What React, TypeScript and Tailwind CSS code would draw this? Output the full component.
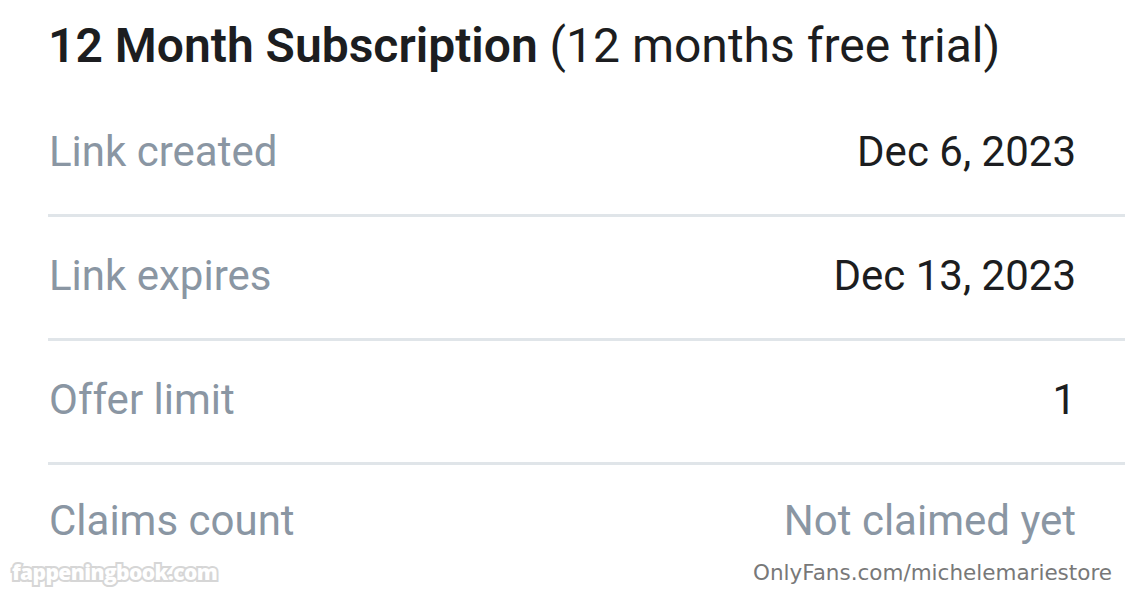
import React from "react";

const rows: { label: string; value: string; muted?: boolean }[] = [
  { label: "Link created", value: "Dec 6, 2023" },
  { label: "Link expires", value: "Dec 13, 2023" },
  { label: "Offer limit", value: "1" },
  { label: "Claims count", value: "Not claimed yet", muted: true },
];

export default function App() {
  return (
    <div className="relative w-[1125px] h-[598px] overflow-hidden bg-white font-['Roboto',sans-serif]">
      <div className="h-[93px] flex items-center pb-[2px] pl-[48px] text-[48px] text-[#1c1d20] whitespace-nowrap">
        <span className="font-semibold">12 Month Subscription</span>
        <span className="font-normal">&nbsp;(12 months free trial)</span>
      </div>
      <div className="ml-[48px]">
        {rows.map((r, i) => (
          <div
            key={r.label}
            className={
              i < rows.length - 1
                ? "h-[124px] flex items-center justify-between pb-[4px] pr-[49px] border-b-[3px] border-[#e0e5e9]"
                : "h-[112px] flex items-center justify-between pb-[2px] pr-[49px]"
            }
          >
            <span className="text-[42px] text-[#8a96a3] pl-[1px]">{r.label}</span>
            <span className={"text-[42px] " + (r.muted ? "text-[#8a96a3]" : "text-[#1c1d20]")}>
              {r.value}
            </span>
          </div>
        ))}
      </div>
      <div className="absolute left-[12px] top-[557px] text-[21px] font-extrabold text-white font-['Open_Sans',sans-serif] tracking-[-0.6px] [paint-order:stroke_fill] [-webkit-text-stroke:4px_#d6d6d6]">
        fappeningbook.com
      </div>
      <div className="absolute right-[13px] top-[557px] text-[21.5px] text-[#787878] font-['DejaVu_Sans',sans-serif]">
        OnlyFans.com/michelemariestore
      </div>
    </div>
  );
}
